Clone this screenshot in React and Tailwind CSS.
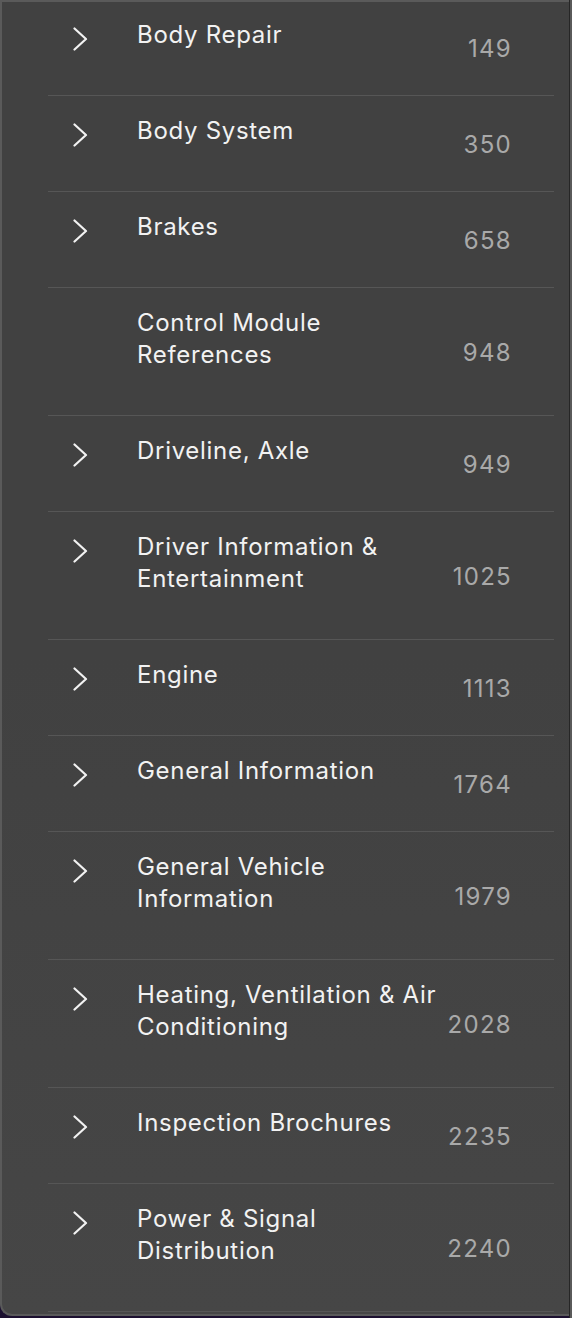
import React from 'react';

const sections = [
  { lines: ['Body Repair'], count: 149, expandable: true },
  { lines: ['Body System'], count: 350, expandable: true },
  { lines: ['Brakes'], count: 658, expandable: true },
  { lines: ['Control Module', 'References'], count: 948, expandable: false },
  { lines: ['Driveline, Axle'], count: 949, expandable: true },
  { lines: ['Driver Information &', 'Entertainment'], count: 1025, expandable: true },
  { lines: ['Engine'], count: 1113, expandable: true },
  { lines: ['General Information'], count: 1764, expandable: true },
  { lines: ['General Vehicle', 'Information'], count: 1979, expandable: true },
  { lines: ['Heating, Ventilation & Air', 'Conditioning'], count: 2028, expandable: true },
  { lines: ['Inspection Brochures'], count: 2235, expandable: true },
  { lines: ['Power & Signal', 'Distribution'], count: 2240, expandable: true },
];

const Chevron = () => (
  <svg width="15" height="24" viewBox="0 0 15 24" fill="none">
    <path d="M1.5 1.5 L13 12 L1.5 22.5" stroke="#f2f2f2" strokeWidth="2.2" strokeLinecap="round" strokeLinejoin="round" />
  </svg>
);

const SectionRow = ({ section }) => (
  <div className="flex border-b border-[#565656]">
    <div className="w-[89px] shrink-0 pl-[25px] pt-[27px]">
      {section.expandable && <Chevron />}
    </div>
    <div className="flex-1 pt-[19px] pb-[44px] text-[24px] leading-[32px] tracking-[0.7px] text-[#f2f2f2]">
      {section.lines.map((line, i) => (
        <div key={i} className="whitespace-nowrap">{line}</div>
      ))}
    </div>
    <div className="flex items-center pt-[3px] pr-[42px] text-[24px] leading-[32px] tracking-[1.3px] text-[#a9a9a9]">
      {section.count}
    </div>
  </div>
);

export default function App() {
  return (
    <div className="h-[1318px] w-[572px] bg-[#1c1030] flex font-['Inter','Noto_Sans',sans-serif] overflow-hidden">
      <div className="flex-1 h-[1316px] border-l-2 border-t-2 border-b-2 border-[#5a5a5a] rounded-bl-[12px] overflow-hidden bg-gradient-to-b from-[#414141] via-[#414141] to-[#464646]">
        <div className="-mt-[2px] ml-[46px] mr-[15px]">
          {sections.map((s) => (
            <SectionRow key={s.count} section={s} />
          ))}
        </div>
      </div>
      <div className="w-px bg-[#262626]" />
      <div className="w-[2px] bg-[#5a5a5a]" />
    </div>
  );
}
